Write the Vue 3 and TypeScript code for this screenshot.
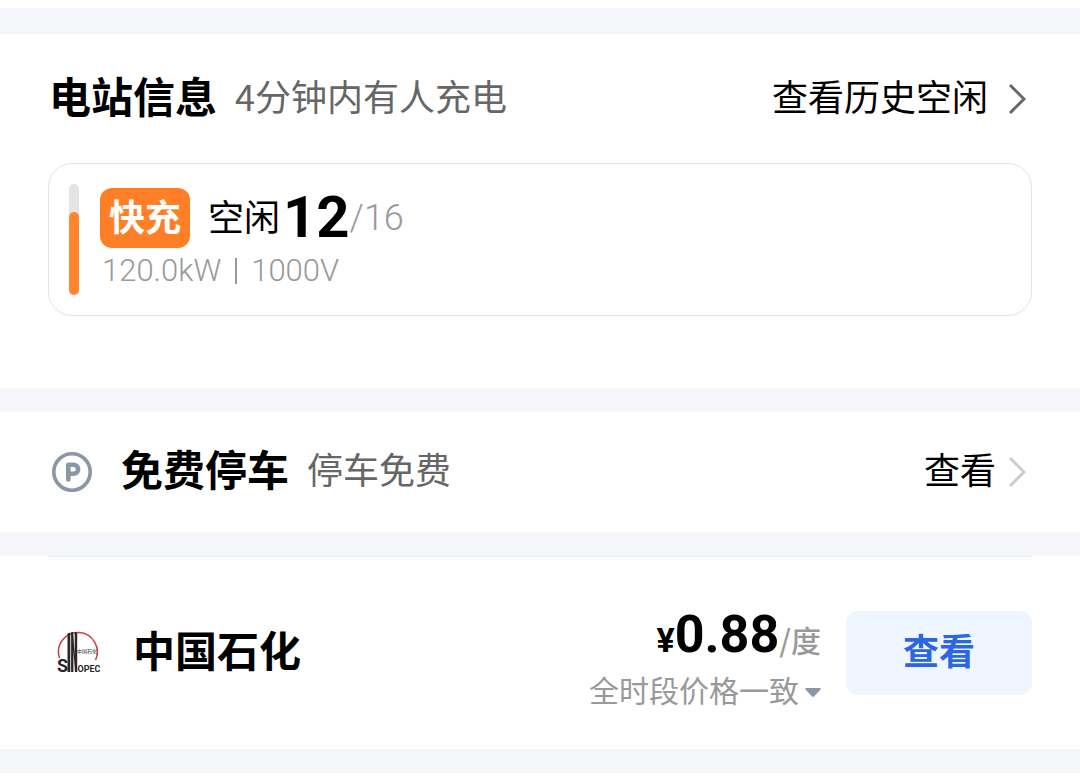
<script setup lang="ts">
interface Charger {
  kind: string
  free: number
  total: number
  power: string
  voltage: string
}

const charger: Charger = { kind: '快充', free: 12, total: 16, power: '120.0kW', voltage: '1000V' }
const usage = `${(charger.free / charger.total) * 100}%`
</script>

<template>
  <main class="page">
    <section class="panel station">
      <header class="row">
        <h2 class="title">电站信息</h2>
        <span class="note">4分钟内有人充电</span>
        <a class="more" href="#history">
          <span class="link-text">查看历史空闲</span>
          <svg class="chevron dark" viewBox="0 0 18 32" aria-hidden="true"><path d="M2 2 16 16 2 30" /></svg>
        </a>
      </header>
      <div class="card">
        <div class="gauge"><div class="level" :style="{ height: usage }"></div></div>
        <div class="info">
          <div class="status">
            <span class="tag">{{ charger.kind }}</span>
            <span class="label">空闲</span>
            <strong class="count">{{ charger.free }}</strong>
            <span class="total">/{{ charger.total }}</span>
          </div>
          <div class="spec">
            <span>{{ charger.power }}</span><i class="bar"></i><span>{{ charger.voltage }}</span>
          </div>
        </div>
      </div>
    </section>

    <section class="panel parking">
      <div class="row">
        <svg class="park-icon" viewBox="0 0 40 40" aria-hidden="true">
          <circle cx="20" cy="20" r="18.2" />
          <path class="letter" d="M16.300 27.500V12.700h5.300a4.500 4.500 0 0 1 0 9h-5.300" />
        </svg>
        <h2 class="title">免费停车</h2>
        <span class="note">停车免费</span>
        <a class="more near" href="#parking">
          <span class="link-text">查看</span>
          <svg class="chevron" viewBox="0 0 18 32" aria-hidden="true"><path d="M2 2 16 16 2 30" /></svg>
        </a>
      </div>
    </section>

    <section class="panel operator">
      <div class="row offer">
        <svg class="logo" viewBox="0 2 44 46" role="img" aria-label="SINOPEC">
          <path class="ring" d="M3.500 30A19.400 19.400 0 1 1 39.500 32" />
          <text class="mark" x="21" y="25">中国石化</text>
          <path class="pillar" d="M11.500 5.500 14.300 4.500v39.500h-2.800zM15.100 4.200 17.200 4l1.500 24V4l2.500 .5V44h-2.200L17.400 22V44h-2.300z" />
          <text class="word big" x="1" y="44">S</text>
          <text class="word" x="21.500" y="44">OPEC</text>
        </svg>
        <h2 class="title">中国石化</h2>
        <div class="price">
          <div class="amount">
            <span class="yen">¥</span><strong class="value">0.88</strong><span class="unit">/度</span>
          </div>
          <button class="period" type="button">
            全时段价格一致
            <svg class="caret" viewBox="0 0 16 9" aria-hidden="true"><path d="M1 0H15Q16.500 .6 15.500 1.600L9 8.500Q8 9.300 7 8.500L.5 1.600Q-.5 .6 1 0Z" /></svg>
          </button>
        </div>
        <button class="view" type="button">查看</button>
      </div>
    </section>
  </main>
</template>

<style>
body {
  margin: 0;
  background: #fff;
}
</style>

<style scoped>
.page {
  padding: 8px 0;
  color: #000;
  font-family: "Noto Sans CJK SC", sans-serif;
}
.panel {
  box-sizing: border-box;
  padding: 0 48px;
  border-bottom: 24px solid #f5f6f9;
}
.station {
  border-top: 26px solid #f5f6f9;
  padding-bottom: 72px;
}
.row {
  display: flex;
  align-items: center;
}
.station .row {
  height: 129px;
}
.parking .row {
  height: 120px;
}
.title {
  margin: 0;
  padding: 0 0 8px 1px;
  font-size: 42px;
  line-height: 60px;
  font-weight: 700;
  white-space: nowrap;
}
.note {
  margin-left: 18px;
  padding-bottom: 8px;
  color: #666;
  font-size: 36px;
  line-height: 52px;
  white-space: nowrap;
}
.more {
  display: flex;
  align-items: center;
  gap: 20px;
  margin-left: auto;
  padding-right: 6px;
  color: #000;
  font-size: 36px;
  line-height: 52px;
  text-decoration: none;
  white-space: nowrap;
}
.link-text {
  padding-bottom: 8px;
}
.near {
  gap: 12px;
}
.chevron {
  width: 18px;
  height: 32px;
  fill: none;
  stroke: #ccc;
  stroke-width: 3;
}
.dark {
  stroke: #666;
}
.card {
  display: flex;
  gap: 21px;
  padding: 20px;
  border: 1px solid #ede2d6;
  border-radius: 24px;
}
.gauge {
  display: flex;
  align-items: flex-end;
  width: 10px;
  height: 111px;
  border-radius: 5px;
  background: #e4e4e4;
}
.level {
  width: 100%;
  border-radius: 5px;
  background: #ff852f;
}
.status {
  display: flex;
  align-items: center;
  height: 60px;
  margin-top: 4px;
  white-space: nowrap;
}
.tag {
  padding: 0 9px 6px;
  border-radius: 12px;
  background: #ff7f27;
  color: #fff;
  font-size: 36px;
  line-height: 54px;
  font-weight: 700;
}
.label {
  margin-left: 18px;
  padding-bottom: 6px;
  font-size: 36px;
  line-height: 52px;
}
.count {
  margin-left: 3px;
  padding-bottom: 2px;
  font-family: Roboto, sans-serif;
  font-size: 58px;
  line-height: 58px;
  font-weight: 700;
}
.total {
  color: #999;
  font-family: Roboto, sans-serif;
  font-size: 36px;
  line-height: 52px;
  font-weight: 300;
}
.spec {
  display: flex;
  align-items: center;
  height: 38px;
  margin-top: 4px;
  padding-left: 2px;
  color: #999;
  font-family: Roboto, sans-serif;
  font-size: 31px;
  font-weight: 300;
  line-height: 38px;
}
.bar {
  width: 2px;
  height: 26px;
  margin: 0 14px;
  background: #999;
}
.park-icon {
  width: 40px;
  height: 40px;
  margin: 0 28px 0 4px;
  fill: none;
  stroke: #8b97a7;
  stroke-width: 3.6;
}
.letter {
  stroke-width: 4.6;
  stroke-linecap: round;
  stroke-linejoin: round;
}
.offer {
  height: 192px;
  border-top: 1px solid #e9eaec;
}
.logo {
  width: 44px;
  height: 46px;
  margin: 0 32px 0 8px;
}
.ring {
  fill: none;
  stroke: #c5454d;
  stroke-width: 1.6;
}
.pillar {
  fill: #2b2526;
}
.mark {
  fill: #333;
  font-size: 5px;
}
.word {
  fill: #2b2526;
  font-family: Roboto, sans-serif;
  font-size: 9px;
  font-weight: 700;
}
.big {
  font-size: 18px;
}
.price {
  display: flex;
  flex-direction: column;
  align-items: flex-end;
  margin-left: auto;
  margin-right: 25px;
  padding-top: 10px;
  white-space: nowrap;
}
.amount {
  display: flex;
  align-items: baseline;
  height: 62px;
  font-family: Roboto, sans-serif;
  line-height: 60px;
}
.yen {
  font-size: 34px;
  font-weight: 700;
}
.value {
  font-size: 52px;
  font-weight: 700;
}
.unit {
  color: #999;
  font-family: "Noto Sans CJK SC", sans-serif;
  font-size: 30px;
  font-weight: 500;
}
.period {
  display: flex;
  align-items: center;
  gap: 6px;
  padding: 0;
  border: 0;
  background: none;
  color: #999;
  font-family: inherit;
  font-size: 30px;
  line-height: 44px;
}
.caret {
  width: 16px;
  height: 9px;
  margin-top: 6px;
  fill: #8b97a7;
}
.view {
  width: 186px;
  height: 84px;
  padding: 0 0 8px;
  border: 0;
  border-radius: 12px;
  background: #f0f6ff;
  color: #2b66e5;
  font-family: inherit;
  font-size: 36px;
  font-weight: 700;
}
</style>
